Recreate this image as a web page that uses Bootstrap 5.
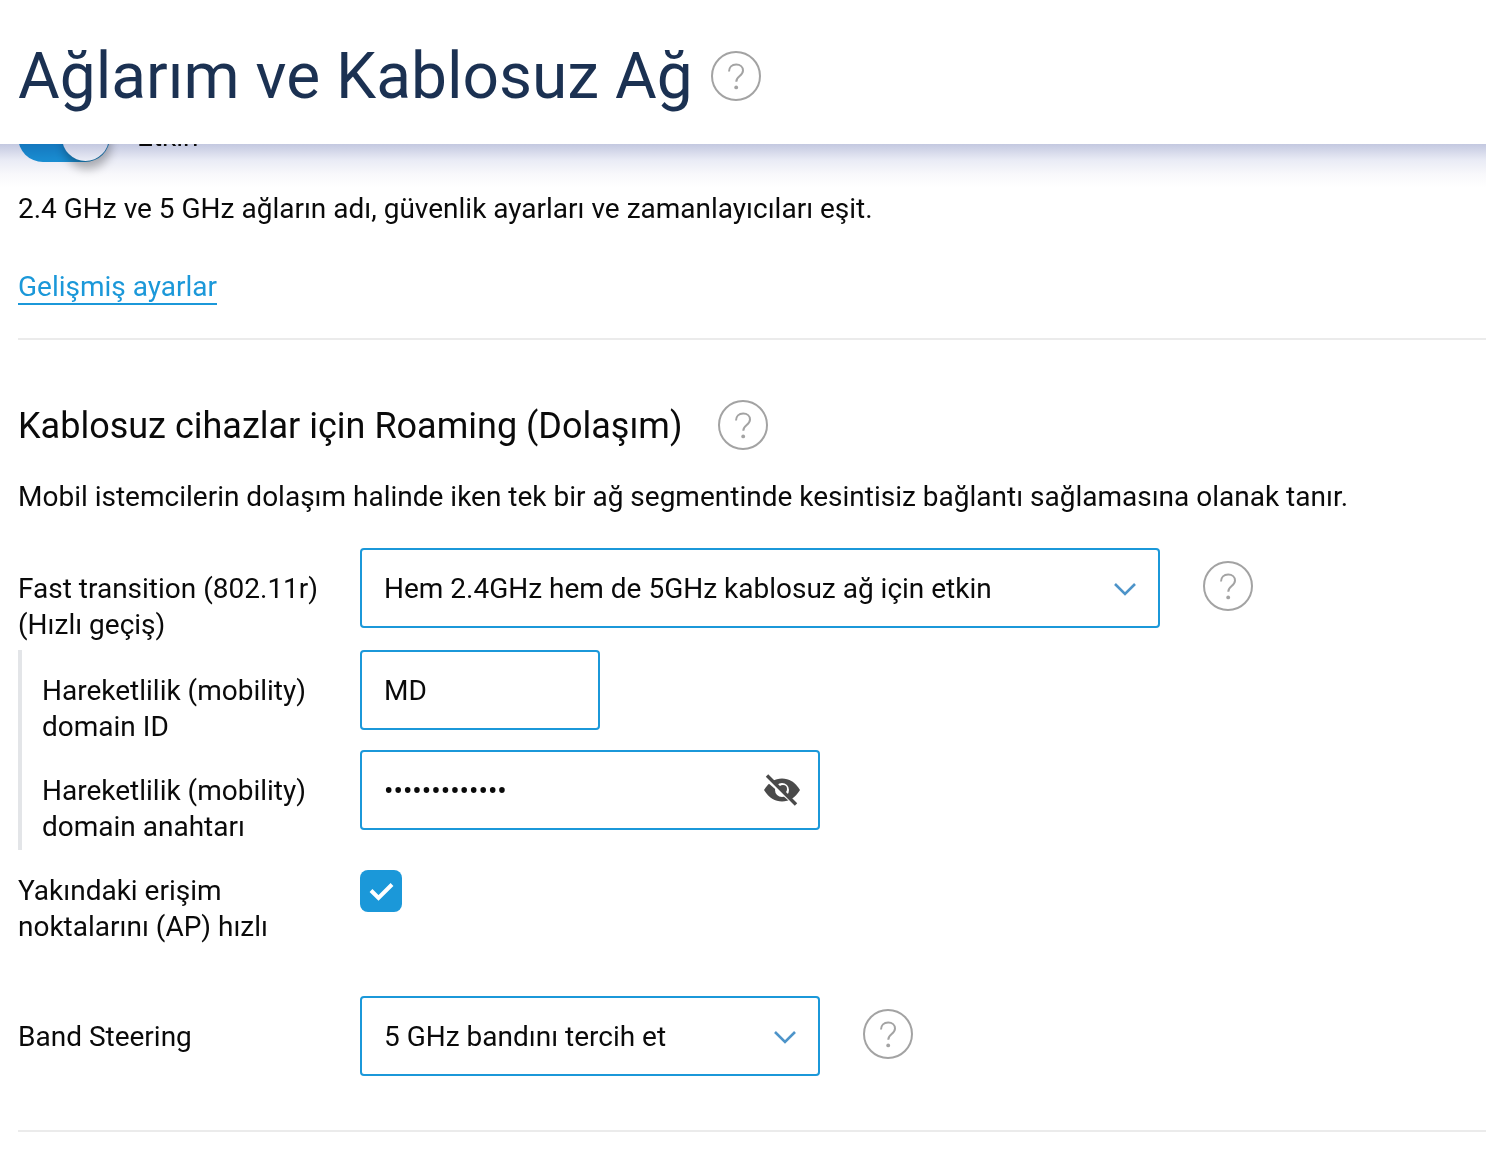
<!DOCTYPE html>
<html lang="tr">
<head>
  <meta charset="UTF-8" />
  <meta name="viewport" content="width=device-width, initial-scale=1.0"/>
  <title>Ağlarım ve Kablosuz Ağ</title>
  <link href="https://cdn.jsdelivr.net/npm/bootstrap@5.3.0/dist/css/bootstrap.min.css" rel="stylesheet">
  <style>
    html, body { height: 1158px; overflow: hidden; }
    body {
      background: #fff;
      color: #0a0a0a;
      font-family: Roboto, "Liberation Sans", sans-serif;
      font-size: 28px;
      line-height: 36px;
    }
    .top-bar {
      position: relative;
      z-index: 3;
      height: 144px;
      padding-left: 18px;
      background: #fff;
      gap: 18px;
    }
    .top-bar h1 {
      margin: 10px 0 0;
      color: #1b3152;
      font-size: 64px;
      font-weight: 400;
      line-height: 1;
    }
    .top-bar .help-icon { margin-top: 8px; }
    .top-shade {
      position: absolute;
      top: 144px;
      left: 0;
      right: 0;
      height: 44px;
      z-index: 2;
      pointer-events: none;
      mix-blend-mode: multiply;
      background: linear-gradient(#c3c8e0, #e9ebf5 36%, #f8f8fb 68%, #fff);
    }
    .page-body { padding-left: 18px; }
    .toggle-row { height: 50px; margin-top: -32px; gap: 27px; }
    .toggle-track {
      width: 92px;
      height: 50px;
      border-radius: 25px;
      background: #1b98d9;
      position: relative;
    }
    .toggle-knob {
      position: absolute;
      right: 1px;
      top: 1.500px;
      width: 47px;
      height: 47px;
      border-radius: 50%;
      background: #fff;
      box-shadow: 2px 8px 10px rgba(0, 0, 0, .28);
    }
    .intro-text { margin: 29px 0 0; height: 36px; }
    .more-link {
      display: inline-block;
      margin-top: 42px;
      color: #1b98d9;
      text-decoration: none;
      border-bottom: 2px solid #1b98d9;
      height: 36px;
    }
    .sep { height: 2px; background: #ebebeb; }
    .sep-top { margin-top: 33px; }
    .section-title { margin: 60px 0 0; height: 50px; gap: 36px; }
    .section-title h2 { margin: 0; padding-top: 1px; font-size: 36px; line-height: 50px; font-weight: 400; color: #0a0a0a; }
    .section-text { margin: 29px 0 0; height: 36px; }
    .field-row { height: 80px; }
    .first-row { margin-top: 33px; }
    .check-row { margin-top: 20px; }
    .band-row { margin-top: 46px; }
    .field-label { width: 342px; flex: none; padding-top: 23px; }
    .check-row .field-label { padding-top: 3px; }
    .sub-group { border-left: 4px solid #e3e5e8; gap: 20px; margin-top: 22px; padding-bottom: 20px; }
    .sub-group .field-label { width: 338px; padding-left: 20px; }
    .box {
      height: 80px;
      border: 2px solid #1b98d9;
      border-radius: 4px;
      padding: 2px 21px 0 22px;
      background: #fff;
      flex: none;
    }
    .box-wide { width: 800px; }
    .box-mid { width: 460px; }
    .box-short { width: 240px; }
    .eye-icon { margin-right: -4px; margin-top: -2px; }
    .check-box {
      width: 42px;
      height: 42px;
      border-radius: 8px;
      background: #1b98d9;
    }
    .help-icon { flex: none; display: block; }
    .help-side { margin: 13px 0 0 43px; }
    .sep-end { margin-top: 54px; }
  </style>
</head>
<body>
  <header class="top-bar d-flex align-items-center">
    <h1>Ağlarım ve Kablosuz Ağ</h1>
    <svg class="help-icon" width="50" height="50" viewBox="0 0 50 50"><use href="#help"/></svg>
  </header>
  <div class="top-shade"></div>

  <svg width="0" height="0" class="d-block">
    <symbol id="help" viewBox="0 0 50 50">
      <circle cx="25" cy="25" r="24" fill="none" stroke="#a3a3a3" stroke-width="2"/>
      <path d="M18 20.500c0-4.200 3-7 7.200-7 4 0 6.800 2.600 6.800 6 0 2.800-1.600 4.200-3.600 5.800-1.900 1.500-3.100 2.700-3.100 5.400" fill="none" stroke="#a3a3a3" stroke-width="2"/>
      <circle cx="25.200" cy="36.400" r="1.900" fill="#a3a3a3"/>
    </symbol>
    <symbol id="chevron" viewBox="0 0 24 16">
      <path d="M2 3l10 10L22 3" fill="none" stroke="#4d94c9" stroke-width="2.600"/>
    </symbol>
  </svg>

  <main class="page-body">
    <div class="toggle-row d-flex align-items-center">
      <div class="toggle-track"><div class="toggle-knob"></div></div>
      <span>Etkin</span>
    </div>
    <p class="intro-text">2.4 GHz ve 5 GHz ağların adı, güvenlik ayarları ve zamanlayıcıları eşit.</p>
    <a class="more-link" href="#">Gelişmiş ayarlar</a>
    <div class="sep sep-top"></div>

    <div class="section-title d-flex align-items-center">
      <h2>Kablosuz cihazlar için Roaming (Dolaşım)</h2>
      <svg class="help-icon" width="50" height="50" viewBox="0 0 50 50"><use href="#help"/></svg>
    </div>
    <p class="section-text">Mobil istemcilerin dolaşım halinde iken tek bir ağ segmentinde kesintisiz bağlantı sağlamasına olanak tanır.</p>

    <div class="field-row first-row d-flex">
      <div class="field-label">Fast transition (802.11r)<br>(Hızlı geçiş)</div>
      <div class="box box-wide d-flex align-items-center justify-content-between">
        <span>Hem 2.4GHz hem de 5GHz kablosuz ağ için etkin</span>
        <svg width="24" height="16" viewBox="0 0 24 16"><use href="#chevron"/></svg>
      </div>
      <svg class="help-icon help-side" width="50" height="50" viewBox="0 0 50 50"><use href="#help"/></svg>
    </div>

    <div class="sub-group d-flex flex-column">
      <div class="field-row d-flex">
        <div class="field-label">Hareketlilik (mobility)<br>domain ID</div>
        <div class="box box-short d-flex align-items-center">MD</div>
      </div>
      <div class="field-row d-flex">
        <div class="field-label">Hareketlilik (mobility)<br>domain anahtarı</div>
        <div class="box box-mid d-flex align-items-center justify-content-between">
          <span>•••••••••••••</span>
          <svg class="eye-icon" width="38" height="32" viewBox="0 0 38 32">
            <path d="M1 16C6 8 12 4.500 19 4.500S32 8 37 16c-5 8-11 11.500-18 11.500S6 24 1 16z" fill="#4a4a4a"/>
            <circle cx="19" cy="16" r="7" fill="#fff"/>
            <circle cx="20" cy="15" r="4" fill="#4a4a4a"/>
            <path d="M2 4l30 26" stroke="#fff" stroke-width="3.500"/>
            <path d="M4 1.500l29 29" stroke="#4a4a4a" stroke-width="3.400"/>
          </svg>
        </div>
      </div>
    </div>

    <div class="field-row check-row d-flex">
      <div class="field-label">Yakındaki erişim<br>noktalarını (AP) hızlı</div>
      <div class="check-box d-flex align-items-center justify-content-center">
        <svg width="26" height="20" viewBox="0 0 26 20"><path d="M3 9.500l7.500 7.500L24 3.500" fill="none" stroke="#fff" stroke-width="4"/></svg>
      </div>
    </div>

    <div class="field-row band-row d-flex">
      <div class="field-label">Band Steering</div>
      <div class="box box-mid d-flex align-items-center justify-content-between">
        <span>5 GHz bandını tercih et</span>
        <svg width="24" height="16" viewBox="0 0 24 16"><use href="#chevron"/></svg>
      </div>
      <svg class="help-icon help-side" width="50" height="50" viewBox="0 0 50 50"><use href="#help"/></svg>
    </div>
    <div class="sep sep-end"></div>
  </main>
  <script src="https://cdn.jsdelivr.net/npm/bootstrap@5.3.0/dist/js/bootstrap.bundle.min.js"></script>
</body>
</html>
